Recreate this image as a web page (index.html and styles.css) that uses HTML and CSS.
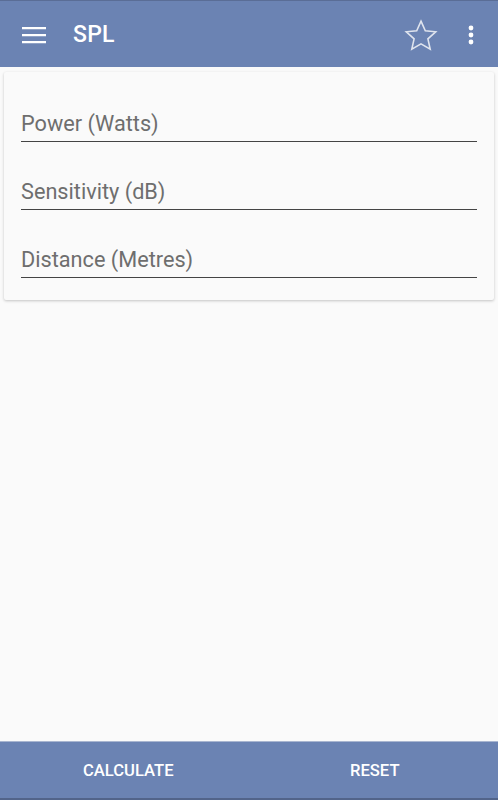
FILE: index.html
```html
<!DOCTYPE html>
<html lang="en">
<head>
    <meta charset="UTF-8">
    <meta name="viewport" content="width=device-width, initial-scale=1.0">
    <title>SPL</title>
    <link rel="stylesheet" href="styles.css">
</head>
<body>
    <header class="toolbar">
        <button class="icon-btn menu-btn" aria-label="Menu">
            <svg width="24" height="24" viewBox="0 0 24 24">
                <path d="M0 4h24v2.2H0zM0 11h24v2.2H0zM0 18h24v2.2H0z" fill="#fff"/>
            </svg>
        </button>
        <h1 class="title">SPL</h1>
        <div class="spacer"></div>
        <button class="icon-btn star-btn" aria-label="Favourite">
            <svg width="34" height="32" viewBox="0 0 34 32">
                <path d="M17 2.2l4.3 9.6 10.4 1-7.8 7 2.3 10.3L17 24.8l-9.2 5.3 2.3-10.3-7.8-7 10.4-1z" fill="none" stroke="#dfe4ee" stroke-width="1.6" stroke-linejoin="miter"/>
            </svg>
        </button>
        <button class="icon-btn more-btn" aria-label="More">
            <svg width="8" height="20" viewBox="0 0 8 20">
                <circle cx="4" cy="3" r="2.4" fill="#fff"/>
                <circle cx="4" cy="10" r="2.4" fill="#fff"/>
                <circle cx="4" cy="17" r="2.4" fill="#fff"/>
            </svg>
        </button>
    </header>

    <main class="content">
        <form class="card">
            <input class="field" type="text" placeholder="Power (Watts)">
            <input class="field" type="text" placeholder="Sensitivity (dB)">
            <input class="field" type="text" placeholder="Distance (Metres)">
        </form>
    </main>

    <footer class="actions">
        <button class="action">CALCULATE</button>
        <button class="action">RESET</button>
    </footer>
</body>
</html>
```

FILE: styles.css
```css
html, body {
    height: 100%;
}
body {
    margin: 0;
    font-family: Roboto, 'Noto Sans', sans-serif;
    background-color: #fafafa;
    display: flex;
    flex-direction: column;
}
.toolbar {
    height: 67px;
    box-sizing: border-box;
    border-top: 1px solid #5a6d96;
    background-color: #6b83b3;
    display: flex;
    align-items: center;
    padding: 0 23px 0 22px;
    color: #fff;
}
.icon-btn {
    background: none;
    border: none;
    padding: 0;
    display: flex;
    align-items: center;
    justify-content: center;
    cursor: pointer;
}
.menu-btn {
    width: 24px;
    height: 24px;
    margin-top: 1px;
}
.title {
    margin: 0 0 0 27px;
    font-size: 23px;
    font-weight: 500;
    letter-spacing: 0.2px;
}
.spacer {
    flex: 1;
}
.star-btn {
    width: 34px;
    height: 32px;
    margin-right: 29px;
    margin-top: 1px;
}
.more-btn {
    width: 8px;
    height: 20px;
    margin-top: 2px;
}
.content {
    flex: 1;
    padding: 5px 4px;
}
.card {
    background-color: #fafafa;
    border-radius: 2px;
    box-shadow: 0 1px 3px rgba(0, 0, 0, 0.22);
    padding: 24px 17px 22px;
    height: 228px;
    box-sizing: border-box;
    display: flex;
    flex-direction: column;
    gap: 22px;
}
.field {
    border: none;
    border-bottom: 1px solid #444;
    background: transparent;
    font-family: inherit;
    font-size: 21.7px;
    line-height: 26px;
    color: #333;
    padding: 15px 0 4px;
    outline: none;
}
.field::placeholder {
    color: #6e6e6e;
}
.actions {
    height: 59px;
    box-sizing: border-box;
    border-top: 1px solid #a9b6d0;
    border-bottom: 2px solid #52648a;
    background-color: #6b83b3;
    display: flex;
    padding-left: 5px;
}
.action {
    flex: 1;
    background: none;
    border: none;
    color: #fff;
    font-family: inherit;
    font-size: 16.6px;
    font-weight: 500;
    padding-top: 2px;
    cursor: pointer;
}
```
